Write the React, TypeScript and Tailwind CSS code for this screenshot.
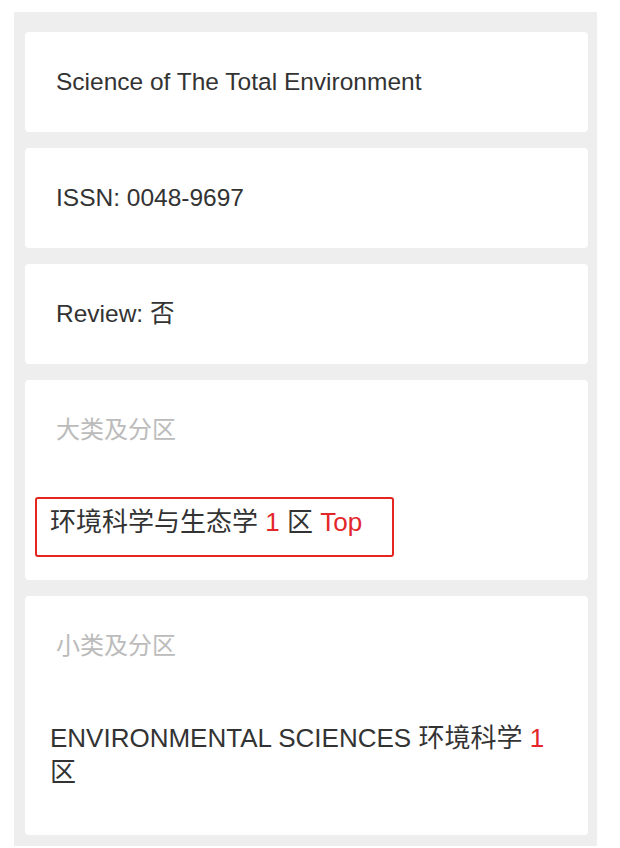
const fontStack = "font-['Liberation_Sans','Noto_Sans_CJK_SC',sans-serif]"

interface InfoCardProps {
  text: React.ReactNode
}

// 單行資訊卡
const InfoCard = ({ text }: InfoCardProps) => (
  <div className="flex h-[100px] items-center rounded-[4px] bg-white pl-[31px] text-[24.5px] text-[#333]">
    {text}
  </div>
)

interface SectionCardProps {
  label: string
  children: React.ReactNode
  contentClassName?: string
}

// 分區卡片：灰色標題 + 內容
const SectionCard = ({ label, children, contentClassName }: SectionCardProps) => (
  <div className="rounded-[4px] bg-white text-[#333]">
    <div className="flex h-[100px] items-center pl-[31px] text-[24px] text-[#bbb]">{label}</div>
    <div className={`text-[26px] ${contentClassName ?? ''}`}>{children}</div>
  </div>
)

export default function App() {
  return (
    <div className={`min-h-[848px] bg-white pt-[12px] ${fontStack}`}>
      <div className="ml-[14px] flex w-[583px] flex-col gap-[16px] bg-[#eeeeee] pt-[20px] pb-[11px] pl-[11px] pr-[9px]">
        <InfoCard text="Science of The Total Environment" />
        <InfoCard text="ISSN: 0048-9697" />
        <InfoCard text="Review: 否" />

        <SectionCard label="大类及分区" contentClassName="pl-[10px] pt-[17px] pb-[23px]">
          <div className="w-fit rounded-[3px] border-2 border-[#e3261f] pt-[6px] pb-[16px] pl-[13px] pr-[30px] leading-[34px]">
            环境科学与生态学 <span className="text-[#e3262b]">1</span> 区{' '}
            <span className="text-[#e3262b]">Top</span>
          </div>
        </SectionCard>

        <SectionCard label="小类及分区" contentClassName="pl-[25px] pr-[25px] pt-[25px] pb-[46px] leading-[34px]">
          ENVIRONMENTAL SCIENCES 环境科学 <span className="text-[#e3262b]">1</span> 区
        </SectionCard>
      </div>
    </div>
  )
}
